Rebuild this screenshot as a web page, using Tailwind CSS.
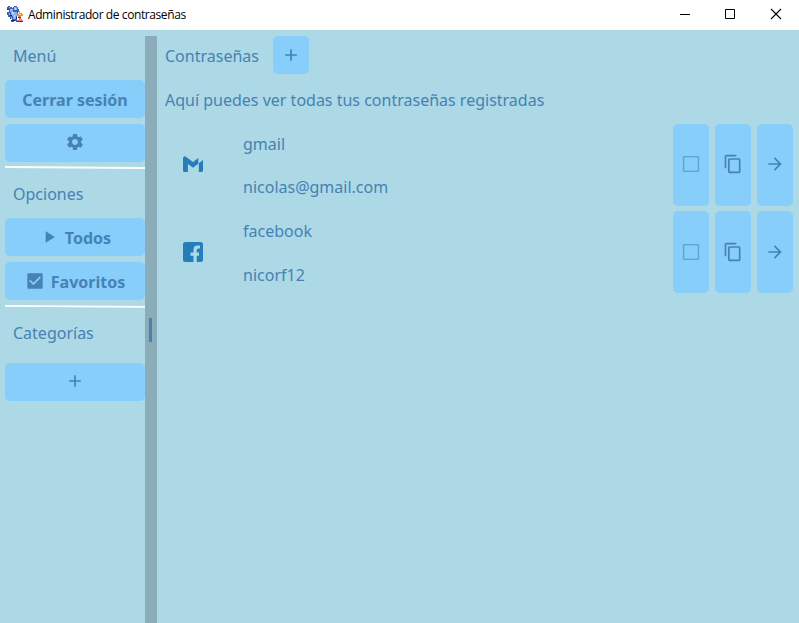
<!DOCTYPE html>
<html lang="es">
<head>
<meta charset="utf-8">
<title>Administrador de contraseñas</title>
<script src="https://cdn.jsdelivr.net/npm/@tailwindcss/browser@4"></script>
</head>
<body class="w-[799px] h-[623px] overflow-hidden bg-[#add8e6] flex flex-col text-[#4682b4] text-[16px] leading-[22px] font-['Noto_Sans',sans-serif]">
<header class="h-[30px] shrink-0 bg-white flex items-center text-black">
  <svg class="ml-[7px] w-4 h-4 shrink-0 relative -top-px" viewBox="0 0 16 16" shape-rendering="crispEdges">
    <path fill="#3a62b0" d="M1 0h2v1h2v1h1V1h1V0h3v1h1v2h1v3h-1v3h-1v5h1v2H9v-1H7v1H4v-1h1v-2H3v-2H1V9H0V6h2V4H0V1h1z"/>
    <path fill="#8fb0ee" d="M2 1h1v1H2zM3 3h3v3H3zM7 1h3v3H7zM4 6h6v4H4zM2 7h1v2H2zM6 10h3v3H6zM4 11h1v2H4z"/>
    <path fill="#c9dcff" d="M4 3h1v1H4zM8 2h1v2H8zM5 6h2v2H5zM7 9h1v2H7z"/>
    <path fill="#17266b" d="M0 3h2v1H0zM3 9h2v1H3zM4 14h4v1H4zM9 11h1v2H9z"/>
    <path fill="#e99142" d="M12 5h1v2h2v1h1v2h-2v1h-3v-1h-1V8h2z"/>
    <path fill="#ffd46b" d="M12 8h2v1h-2z"/>
    <path fill="#7b1f50" d="M11 11h3v1h-3zM10 15h6v1h-6z"/>
    <path fill="#ed7894" d="M12 12h2v1h1v1h1v1h-6v-1h2z"/>
  </svg>
  <span class="ml-[5px] text-[12px] leading-[16px] font-['Open_Sans',sans-serif] tracking-[-0.41px] whitespace-nowrap">Administrador de contraseñas</span>
  <div class="ml-auto flex h-full">
    <svg class="w-[45px] h-[30px]" viewBox="0 0 45 30"><path d="M18 14.500h10" stroke="#000"/></svg>
    <svg class="w-[45px] h-[30px]" viewBox="0 0 45 30"><path d="M18.500 9.500h9v9h-9z" stroke="#000" fill="none"/></svg>
    <svg class="w-[47px] h-[30px]" viewBox="0 0 47 30"><path d="M19 9l10 10M29 9l-10 10" stroke="#000" stroke-width="1.100"/></svg>
  </div>
</header>
<main class="flex flex-1 pt-[6px] min-h-0">
  <aside class="w-[145px] pl-[5px] shrink-0 flex flex-col">
    <h2 class="h-[38px] pl-2 flex items-center pb-px mt-px">Menú</h2>
    <button class="mt-[5px] h-[38px] rounded-[5px] bg-[#87cefa] font-bold flex items-center justify-center pt-[2px]">Cerrar sesión</button>
    <button class="mt-[6px] h-[38px] rounded-[5px] bg-[#87cefa] flex items-center justify-center pb-[2px]" aria-label="Configuración">
      <svg class="w-5 h-5" viewBox="0 0 24 24" fill="#4682b4"><path d="M19.140 12.940c.04-.3.060-.61.060-.94 0-.32-.02-.64-.07-.94l2.030-1.580c.18-.14.23-.41.120-.61l-1.920-3.320c-.12-.22-.37-.29-.59-.22l-2.390.96c-.5-.38-1.030-.7-1.620-.94l-.36-2.540c-.04-.24-.24-.41-.48-.41h-3.840c-.24 0-.43.170-.47.410l-.36 2.540c-.59.240-1.130.570-1.620.940l-2.390-.96c-.22-.08-.47 0-.59.220L2.740 8.870c-.12.210-.08.470.120.610l2.030 1.580c-.05.300-.09.630-.09.940s.02.640.070.940l-2.030 1.580c-.18.140-.23.410-.12.610l1.920 3.320c.12.220.37.290.59.220l2.390-.96c.5.380 1.030.7 1.620.94l.36 2.540c.05.240.24.410.48.410h3.840c.24 0 .44-.17.470-.41l.36-2.540c.59-.24 1.130-.56 1.620-.94l2.390.96c.22.080.47 0 .59-.22l1.920-3.320c.12-.22.070-.47-.12-.61l-2.010-1.580zM12 15.600c-1.980 0-3.600-1.620-3.600-3.600s1.620-3.600 3.600-3.600 3.600 1.620 3.600 3.600-1.620 3.600-3.600 3.600z"/></svg>
    </button>
    <svg class="mt-[4px] h-[4px] w-[140px]" viewBox="0 0 140 4"><path d="M0 1l140 1" stroke="#fff" stroke-width="1.800"/></svg>
    <h2 class="mt-[5px] h-[38px] pl-2 flex items-center">Opciones</h2>
    <button class="mt-[5px] h-[38px] rounded-[5px] bg-[#87cefa] font-bold flex items-center justify-center">
      <svg class="w-5 h-5 mr-[6px]" viewBox="0 0 24 24" fill="#4682b4"><path d="M8 5v14l11-7z"/></svg>
      <span class="pt-[2px]">Todos</span>
    </button>
    <button class="mt-[6px] h-[38px] rounded-[5px] bg-[#87cefa] font-bold flex items-center justify-center">
      <svg class="w-5 h-5 mr-[6px]" viewBox="0 0 24 24" fill="#4682b4"><path d="M20.200 2.700H3.800c-.6 0-1 .4-1 1v16.600c0 .6.4 1 1 1h16.400c.6 0 1-.4 1-1V3.700c0-.6-.4-1-1-1zM10 17l-5-5 1.410-1.410L10 14.170l7.590-7.590L19 8l-9 9z"/></svg>
      <span class="pt-[2px]">Favoritos</span>
    </button>
    <svg class="mt-[4px] h-[4px] w-[140px]" viewBox="0 0 140 4"><path d="M0 1.800l140 1" stroke="#fff" stroke-width="1.800"/></svg>
    <h2 class="mt-[6px] h-[38px] pl-2 flex items-center">Categorías</h2>
    <button class="mt-[11px] h-[38px] rounded-[5px] bg-[#87cefa] flex items-center justify-center pb-[2px]" aria-label="Agregar categoría">
      <svg class="w-5 h-5" viewBox="0 0 24 24" fill="#4682b4"><path d="M19 13h-6v6h-2v-6H5v-2h6V5h2v6h6z"/></svg>
    </button>
  </aside>
  <div class="w-3 shrink-0 bg-[#8badb9] flex items-center justify-center"><div class="w-[3px] h-6 bg-[#4682b4] mr-px"></div></div>
  <section class="flex-1 pl-2 pr-[6px] min-w-0">
    <div class="flex items-center h-[38px]">
      <h1 class="w-[108px] pt-[2px]">Contraseñas</h1>
      <button class="w-9 h-[38px] rounded-[5px] bg-[#87cefa] flex items-center justify-center" aria-label="Agregar contraseña">
        <svg class="w-5 h-5" viewBox="0 0 24 24" fill="#4682b4"><path d="M19 13h-6v6h-2v-6H5v-2h6V5h2v6h6z"/></svg>
      </button>
    </div>
    <p class="mt-[6px] h-[38px] flex items-center pt-[2px] whitespace-nowrap">Aquí puedes ver todas tus contraseñas registradas</p>
    <ul class="mt-[6px] flex flex-col gap-[5px]">
      <li class="flex h-[82px]">
        <div class="w-[56px] flex items-center justify-center pb-[2px]">
          <svg class="w-6 h-6" viewBox="0 0 24 24" fill="#257dbb"><path d="M2 6.200Q2.200 4.200 4.200 4.300L12 10 17.300 6V11.700L12 15.700 6.900 12V20H3.500Q2 20 2 18.500zM17.800 11.300L22 8V18.500Q22 20 20.500 20H17.800z"/></svg>
        </div>
        <div class="ml-[22px] flex-1 flex flex-col justify-between pt-[9px] pb-[8px]"><span>gmail</span><span>nicolas@gmail.com</span></div>
        <div class="flex gap-[6px]">
          <button class="w-9 rounded-[5px] bg-[#87cefa] flex items-center justify-center pb-[2px]" aria-label="Favorito"><svg class="w-5 h-5" viewBox="0 0 20 20" fill="none" stroke="#62a1d0" stroke-width="1.400"><rect x="2.600" y="2.600" width="14.800" height="14.800" rx=".7"/></svg></button>
          <button class="w-9 rounded-[5px] bg-[#87cefa] flex items-center justify-center pb-[2px]" aria-label="Copiar"><svg class="w-5 h-5" viewBox="0 0 24 24" fill="#4682b4"><path d="M16 1H4c-1.100 0-2 .9-2 2v14h2V3h12V1zm3 4H8c-1.100 0-2 .9-2 2v14c0 1.100.9 2 2 2h11c1.100 0 2-.9 2-2V7c0-1.100-.9-2-2-2zm0 16H8V7h11v14z"/></svg></button>
          <button class="w-9 rounded-[5px] bg-[#87cefa] flex items-center justify-center pb-[2px]" aria-label="Abrir"><svg class="w-5 h-5" viewBox="0 0 24 24" fill="#4682b4"><path d="M12 4l-1.410 1.410L16.170 11H4v2h12.170l-5.580 5.590L12 20l8-8z"/></svg></button>
        </div>
      </li>
      <li class="flex h-[82px]">
        <div class="w-[56px] flex items-center justify-center">
          <svg class="w-6 h-6" viewBox="0 0 24 24" fill="#257dbb"><path d="M4.500 2h15A2.500 2.500 0 0 1 22 4.500v15a2.500 2.500 0 0 1-2.500 2.500H15.700v-6.300H18v-3.200h-2.300v-2.300q0-1.700 1.700-1.700H19V5.500h-2.500q-4 0-4 4v3H9.500v3.200h3V22h-8A2.500 2.500 0 0 1 2 19.500v-15A2.500 2.500 0 0 1 4.500 2z"/></svg>
        </div>
        <div class="ml-[22px] flex-1 flex flex-col justify-between pt-[9px] pb-[7px]"><span>facebook</span><span>nicorf12</span></div>
        <div class="flex gap-[6px]">
          <button class="w-9 rounded-[5px] bg-[#87cefa] flex items-center justify-center" aria-label="Favorito"><svg class="w-5 h-5" viewBox="0 0 20 20" fill="none" stroke="#62a1d0" stroke-width="1.400"><rect x="2.600" y="2.600" width="14.800" height="14.800" rx=".7"/></svg></button>
          <button class="w-9 rounded-[5px] bg-[#87cefa] flex items-center justify-center" aria-label="Copiar"><svg class="w-5 h-5" viewBox="0 0 24 24" fill="#4682b4"><path d="M16 1H4c-1.100 0-2 .9-2 2v14h2V3h12V1zm3 4H8c-1.100 0-2 .9-2 2v14c0 1.100.9 2 2 2h11c1.100 0 2-.9 2-2V7c0-1.100-.9-2-2-2zm0 16H8V7h11v14z"/></svg></button>
          <button class="w-9 rounded-[5px] bg-[#87cefa] flex items-center justify-center" aria-label="Abrir"><svg class="w-5 h-5" viewBox="0 0 24 24" fill="#4682b4"><path d="M12 4l-1.410 1.410L16.170 11H4v2h12.170l-5.580 5.590L12 20l8-8z"/></svg></button>
        </div>
      </li>
    </ul>
  </section>
</main>
</body>
</html>
